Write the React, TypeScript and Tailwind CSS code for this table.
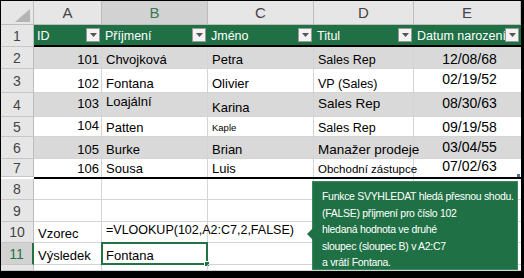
import React from "react";

const cols = ["w-[68px]", "w-[106px]", "w-[106px]", "w-[100px]", "w-[107px]"];

type Cell = { text?: string; cls?: string; size?: string };
type Row = { n: number; h: string; bg: string; cells: Cell[]; sel?: boolean };

const date = "justify-center text-[#444]";

const dataRows: Row[] = [
  {
    n: 2,
    h: "h-[22px]",
    bg: "bg-[#d9d9d9]",
    cells: [
      { text: "101", cls: "justify-end pr-0.5" },
      { text: "Chvojková" },
      { text: "Petra" },
      { text: "Sales Rep", size: "text-[12.5px]" },
      { text: "12/08/68", cls: date, size: "text-[14px]" },
    ],
  },
  {
    n: 3,
    h: "h-[24px]",
    bg: "bg-white",
    cells: [
      { text: "102", cls: "justify-end pr-0.5" },
      { text: "Fontana" },
      { text: "Olivier" },
      { text: "VP (Sales)", size: "text-[12.5px]" },
      { text: "02/19/52", cls: date + " pb-1.5", size: "text-[14px]" },
    ],
  },
  {
    n: 4,
    h: "h-[24px]",
    bg: "bg-[#d9d9d9]",
    cells: [
      { text: "103", cls: "justify-end pr-0.5 pb-1.5" },
      { text: "Loajální", cls: "pb-2" },
      { text: "Karina" },
      { text: "Sales Rep", cls: "pb-1.5", size: "text-[13.5px]" },
      { text: "08/30/63", cls: date + " pb-1.5", size: "text-[14px]" },
    ],
  },
  {
    n: 5,
    h: "h-[20px]",
    bg: "bg-white",
    cells: [
      { text: "104", cls: "justify-end pr-0.5 pb-1" },
      { text: "Patten" },
      { text: "Kaple", cls: "pb-1", size: "text-[9.5px]" },
      { text: "Sales Rep", size: "text-[12.5px]" },
      { text: "09/19/58", cls: date, size: "text-[14px]" },
    ],
  },
  {
    n: 6,
    h: "h-[22px]",
    bg: "bg-[#d9d9d9]",
    cells: [
      { text: "105", cls: "justify-end pr-0.5" },
      { text: "Burke" },
      { text: "Brian" },
      { text: "Manažer prodeje", size: "text-[13.5px]" },
      { text: "03/04/55", cls: date + " pb-1", size: "text-[14px]" },
    ],
  },
  {
    n: 7,
    h: "h-[18px]",
    bg: "bg-white",
    cells: [
      { text: "106", cls: "justify-end pr-0.5" },
      { text: "Sousa" },
      { text: "Luis" },
      { text: "Obchodní zástupce", size: "text-[11.5px]" },
      { text: "07/02/63", cls: date + " pb-1", size: "text-[14px]" },
    ],
  },
];

const lowerRows: Row[] = [
  { n: 8, h: "h-[21px]", bg: "bg-white", cells: [{}, {}, {}, {}, {}] },
  { n: 9, h: "h-[22px]", bg: "bg-white", cells: [{}, {}, {}, {}, {}] },
  {
    n: 10,
    h: "h-[21px]",
    bg: "bg-white",
    cells: [
      { text: "Vzorec" },
      { text: "=VLOOKUP(102,A2:C7,2,FALSE)", cls: "pb-1.5", size: "text-[12.5px]" },
      {},
      {},
      {},
    ],
  },
  {
    n: 11,
    h: "h-[22px]",
    bg: "bg-white",
    sel: true,
    cells: [{ text: "Výsledek" }, { text: "Fontana" }, {}, {}, {}],
  },
  { n: 12, h: "h-[6px]", bg: "bg-white", cells: [{}, {}, {}, {}, {}] },
];

function FilterBtn() {
  return (
    <div className="absolute right-[2px] top-[3px] flex h-[14px] w-[14px] items-center justify-center border border-[#9a9a9a] bg-[#f3f3f3]">
      <svg width="7" height="4" viewBox="0 0 7 4">
        <path d="M0 0 L7 0 L3.5 4 Z" fill="#555" />
      </svg>
    </div>
  );
}

function RowHead({ n, sel, h }: { n: number; sel?: boolean; h: string }) {
  return (
    <div
      className={`${h} w-[33px] shrink-0 flex justify-center overflow-hidden border-b border-[#c6c6c6] text-[14px] leading-none ${
        n === 12 ? "items-start pt-[3px]" : "items-center"
      } ${
        sel
          ? "bg-[#d2d2d2] text-[#217346] border-r-2 border-r-[#217346]"
          : "bg-[#e6e6e6] text-[#444] border-r border-r-[#bdbdbd]"
      }`}
    >
      {n}
    </div>
  );
}

function SheetRow({ row, thick }: { row: Row; thick?: boolean }) {
  return (
    <div className="flex">
      <RowHead n={row.n} sel={row.sel} h={row.h} />
      <div className={`flex ${row.bg} ${thick ? "border-b-2 border-black" : ""}`}>
        {row.cells.map((c, i) => (
          <div
            key={i}
            className={`${cols[i]} ${row.h} relative flex items-end pl-1 pb-0.5 leading-none text-black ${
              c.size ?? "text-[13px]"
            } ${thick ? "" : "border-b border-[#d4d4d4]"} ${i < 4 ? "border-r border-[#d4d4d4]" : ""} ${c.cls ?? ""}`}
          >
            {c.text && <span className="whitespace-nowrap">{c.text}</span>}
            {row.sel && i === 1 && (
              <div className="absolute -left-px -top-px h-[23px] w-[107px] border-2 border-[#217346]">
                <div className="absolute -bottom-[4px] -right-[4px] h-[6px] w-[6px] border border-white bg-[#217346]" />
              </div>
            )}
            {thick && row.n === 7 && i === 4 && (
              <div className="absolute bottom-0 right-px h-[3px] w-[3px] bg-[#4a6fb5]" />
            )}
          </div>
        ))}
      </div>
    </div>
  );
}

export default function App() {
  const headers = ["ID", "Příjmení", "Jméno", "Titul", "Datum narození"];
  return (
    <div
      className="h-[278px] w-[524px] overflow-hidden bg-black pl-px pt-px pr-[3px]"
      style={{ fontFamily: '"Liberation Sans", Arial, sans-serif' }}
    >
      <div className="relative h-[270px] w-[520px] overflow-hidden bg-white">
        {/* column letters */}
        <div className="flex h-[24px]">
          <div className="relative w-[33px] shrink-0 border-b border-r border-[#bdbdbd] bg-[#e6e6e6]">
            <svg className="absolute bottom-[2px] right-[3px]" width="15" height="13" viewBox="0 0 15 13">
              <path d="M15 0 L15 13 L0 13 Z" fill="#b4b4b4" />
            </svg>
          </div>
          {["A", "B", "C", "D", "E"].map((l, i) => (
            <div
              key={l}
              className={`${cols[i]} flex items-center justify-center border-r border-b border-[#bdbdbd] text-[15px] leading-none ${
                i === 1 ? "bg-[#d2d2d2] text-[#3d7a55]" : "bg-[#e6e6e6] text-[#444]"
              }`}
            >
              {l}
            </div>
          ))}
        </div>

        {/* table header row 1 */}
        <div className="flex">
          <RowHead n={1} h="h-[22px]" />
          <div className="flex border-b-2 border-black bg-[#1f7145]">
            {headers.map((t, i) => (
              <div
                key={t}
                className={`${cols[i]} relative flex h-[20px] items-center overflow-hidden pl-[3px] text-[12.5px] leading-none text-white`}
              >
                <span className="whitespace-nowrap pt-[3px]">{t}</span>
                <FilterBtn />
              </div>
            ))}
          </div>
        </div>

        {dataRows.map((r) => (
          <SheetRow key={r.n} row={r} thick={r.n === 7} />
        ))}
        {lowerRows.map((r) => (
          <SheetRow key={r.n} row={r} />
        ))}

        {/* callout */}
        <div className="absolute left-[311px] top-[180px] h-[89px] w-[206px] whitespace-nowrap border border-[#3a8a5c] bg-[#1f7145] pl-[9px] pt-[6px] text-[10.5px] leading-[16.5px] tracking-[-0.3px] text-white">
          <div className="absolute -left-[6px] top-[46px] h-0 w-0 border-y-[6px] border-r-[6px] border-y-transparent border-r-[#1f7145]" />
          <div>Funkce SVYHLEDAT hledá přesnou shodu.</div>
          <div>(FALSE) příjmení pro číslo 102</div>
          <div>hledaná hodnota ve druhé</div>
          <div>sloupec (sloupec B) v A2:C7</div>
          <div>a vrátí Fontana.</div>
        </div>
      </div>
    </div>
  );
}
